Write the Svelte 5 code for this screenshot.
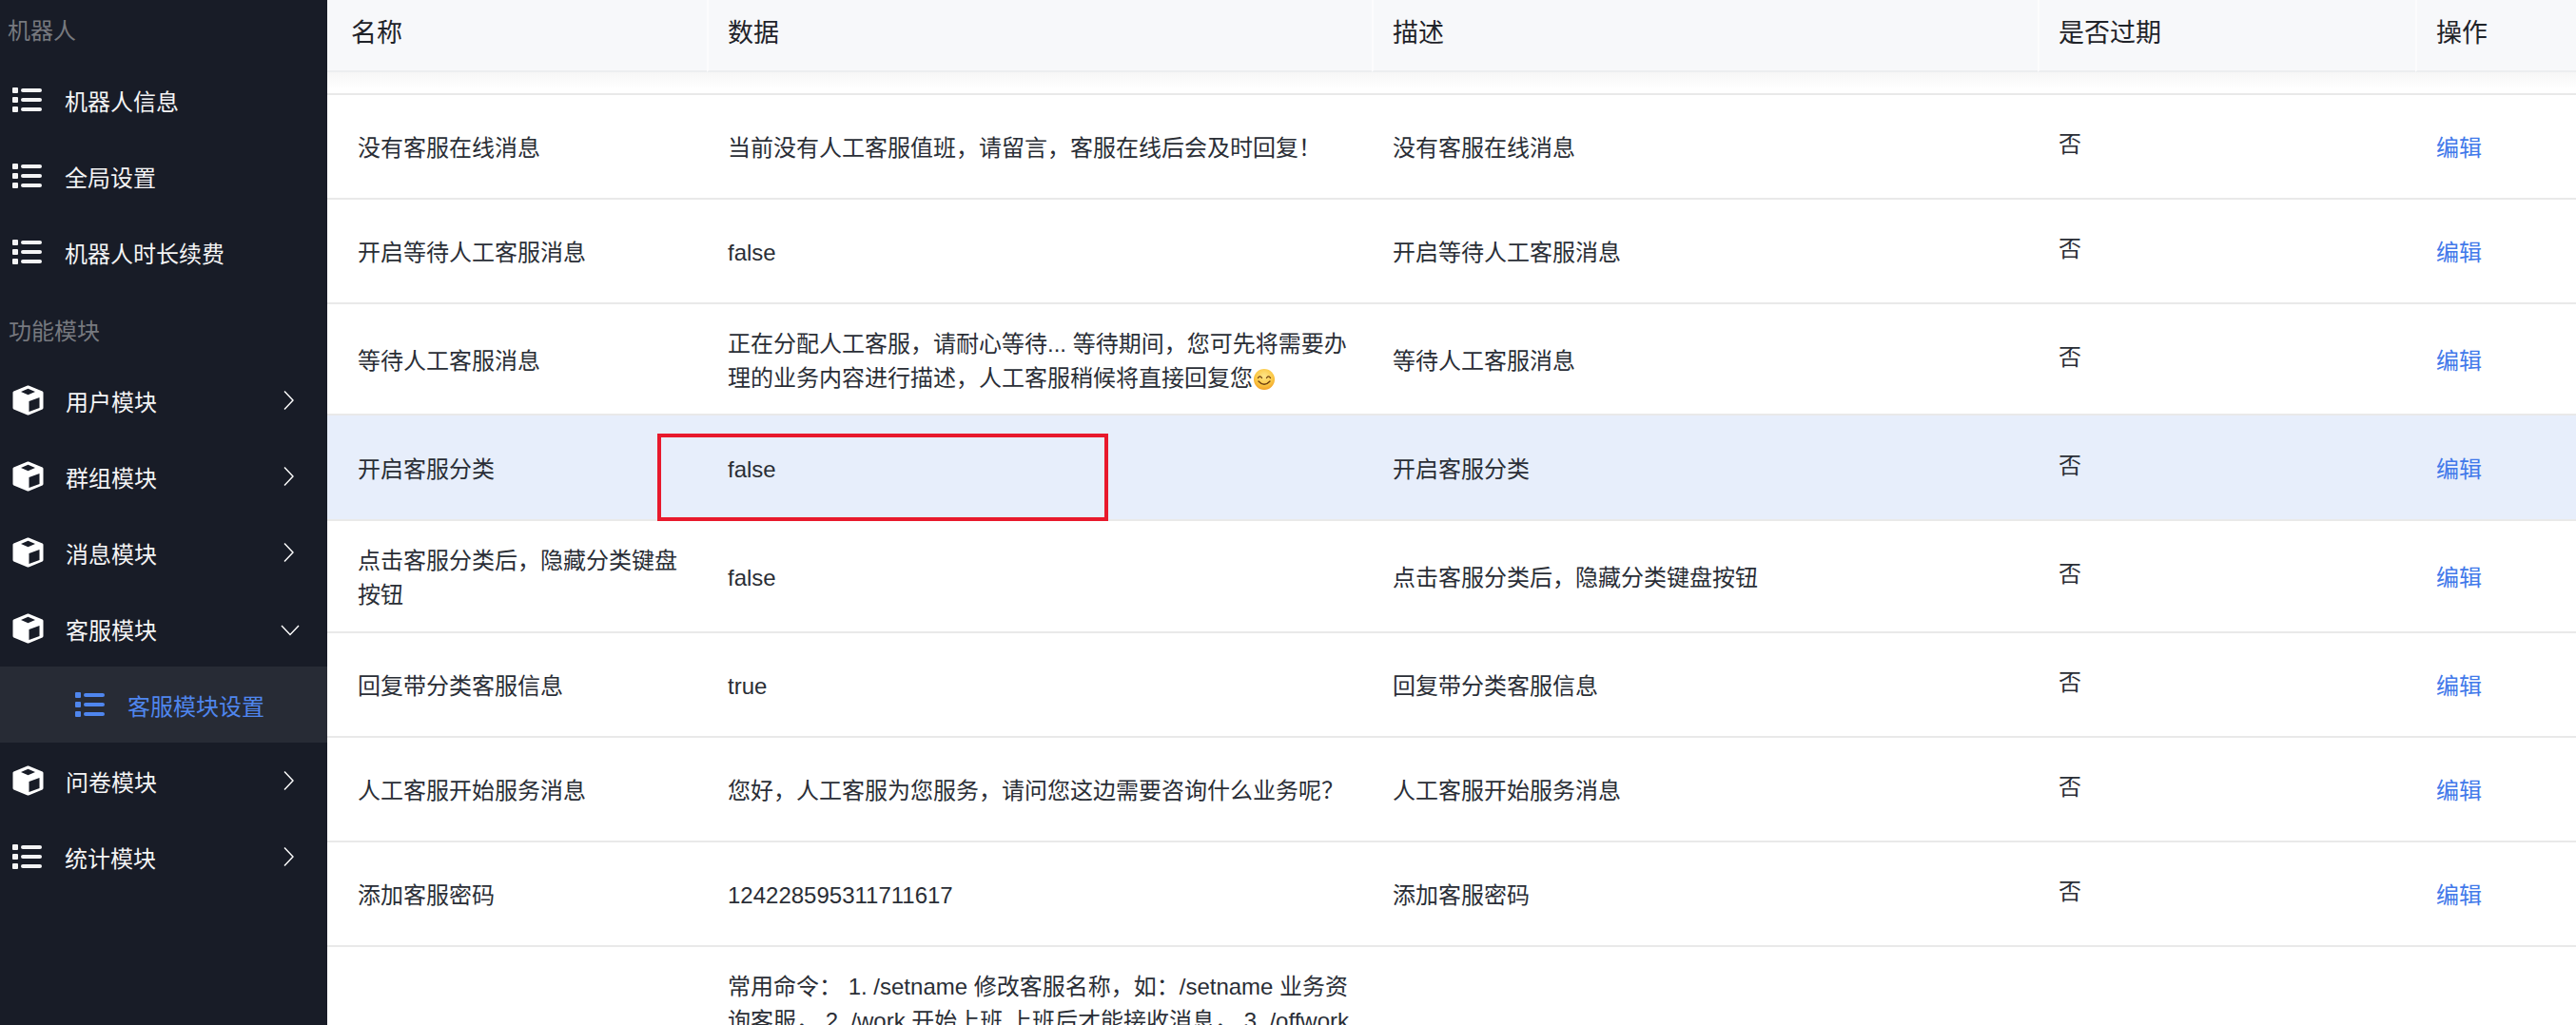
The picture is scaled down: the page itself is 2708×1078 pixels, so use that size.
<script>
  const topItems = ['机器人信息', '全局设置', '机器人时长续费'];
  const modules = [
    { name: '用户模块', icon: 'cube' },
    { name: '群组模块', icon: 'cube' },
    { name: '消息模块', icon: 'cube' },
    { name: '客服模块', icon: 'cube', open: true, children: ['客服模块设置'] },
    { name: '问卷模块', icon: 'cube' },
    { name: '统计模块', icon: 'list' }
  ];
  const columns = ['名称', '数据', '描述', '是否过期', '操作'];
  const rows = [
    { name: '没有客服在线消息', data: '当前没有人工客服值班，请留言，客服在线后会及时回复！' },
    { name: '开启等待人工客服消息', data: 'false' },
    { name: '等待人工客服消息', data: '正在分配人工客服，请耐心等待... 等待期间，您可先将需要办理的业务内容进行描述，人工客服稍候将直接回复您', emoji: true, tight: true },
    { name: '开启客服分类', data: 'false', active: true },
    { name: '点击客服分类后，隐藏分类键盘按钮', data: 'false' },
    { name: '回复带分类客服信息', data: 'true' },
    { name: '人工客服开始服务消息', data: '您好，人工客服为您服务，请问您这边需要咨询什么业务呢？' },
    { name: '添加客服密码', data: '124228595311711617' },
    { name: '', data: '常用命令： 1. /setname 修改客服名称，如：/setname 业务资询客服， 2. /work 开始上班 上班后才能接收消息， 3. /offwork 下班 下班后不再接收消息', hideOps: true }
  ];
</script>

{#snippet listIcon()}
  <svg class="icon" width="32" height="26" viewBox="0 0 32 26" fill="currentColor">
    <rect x="0" y="0" width="6" height="6" rx="1" />
    <rect x="0" y="10" width="6" height="6" rx="1" />
    <rect x="0" y="20" width="6" height="6" rx="1" />
    <rect x="9" y="1" width="22" height="4" rx="2" />
    <rect x="9" y="11" width="22" height="4" rx="2" />
    <rect x="9" y="21" width="22" height="4" rx="2" />
  </svg>
{/snippet}

{#snippet cubeIcon()}
  <svg class="icon" width="33" height="32" viewBox="0 0 33 32">
    <path d="M16.5 2 L31 8 V24 L16.5 30 L2 24 V8 Z" fill="#fff" stroke="#fff" stroke-width="3" stroke-linejoin="round" />
    <path d="M16.5 3.8 L24 7 L16.5 10.2 L9 7 Z" fill="#181c27" />
    <path d="M17.5 17 L28.5 13 V24 L17.5 28 Z" fill="#181c27" />
  </svg>
{/snippet}

{#snippet chevron(open)}
  {#if open}
    <svg class="chev down" width="20" height="12" viewBox="0 0 20 12" fill="none" stroke="#fff" stroke-width="1.4"><path d="M1 1 L10 10.5 L19 1" /></svg>
  {:else}
    <svg class="chev" width="11" height="20" viewBox="0 0 11 20" fill="none" stroke="#fff" stroke-width="1.4"><path d="M1 0.5 L10 10 L1 19.5" /></svg>
  {/if}
{/snippet}

<div class="layout">
  <nav class="sidebar">
    <div class="group first">机器人</div>
    {#each topItems as item}
      <div class="item">{@render listIcon()}<span>{item}</span></div>
    {/each}
    <div class="group">功能模块</div>
    {#each modules as m}
      <div class="item">
        {#if m.icon === 'cube'}{@render cubeIcon()}{:else}{@render listIcon()}{/if}
        <span>{m.name}</span>
        {@render chevron(m.open)}
      </div>
      {#if m.children}
        {#each m.children as child}
          <div class="item sub">{@render listIcon()}<span>{child}</span></div>
        {/each}
      {/if}
    {/each}
  </nav>

  <main class="content">
    <table>
      <colgroup>
        <col style="width: 399px" />
        <col style="width: 699px" />
        <col style="width: 700px" />
        <col style="width: 397px" />
        <col style="width: 169px" />
      </colgroup>
      <thead>
        <tr>
          {#each columns as col}
            <th>{col}</th>
          {/each}
        </tr>
      </thead>
      <tbody>
        <tr class="spacer"><td colspan="5"></td></tr>
        {#each rows as row}
          <tr class:active={row.active} class:tight={row.tight}>
            <td class="name">{row.name}</td>
            <td>
              {row.data}
              {#if row.emoji}
                <svg class="emoji" width="22" height="22" viewBox="0 0 22 22">
                  <defs>
                    <radialGradient id="face" cx="50%" cy="35%" r="70%">
                      <stop offset="0%" stop-color="#fde58a" />
                      <stop offset="60%" stop-color="#fbc845" />
                      <stop offset="100%" stop-color="#ef9a20" />
                    </radialGradient>
                  </defs>
                  <circle cx="11" cy="11" r="11" fill="url(#face)" />
                  <path d="M4.5 9.5 Q6.5 6.2 8.5 9.5 M13.5 9.5 Q15.5 6.2 17.5 9.5" fill="none" stroke="#6b3d10" stroke-width="1.3" stroke-linecap="round" />
                  <path d="M5 13 Q11 19.5 17 13" fill="none" stroke="#6b3d10" stroke-width="1.4" stroke-linecap="round" />
                </svg>
              {/if}
            </td>
            <td>{row.hideOps ? '' : row.name}</td>
            <td class="expired">{row.hideOps ? '' : '否'}</td>
            <td>{#if !row.hideOps}<a href="#top" class="link">编辑</a>{/if}</td>
          </tr>
        {/each}
      </tbody>
    </table>
    <div class="mark"></div>
  </main>
</div>

<style>
  :global(body) {
    margin: 0;
    background: #fff;
  }
  .layout {
    display: flex;
    width: 2708px;
    height: 1078px;
    overflow: hidden;
    font-family: "Liberation Sans", "Noto Sans CJK SC", sans-serif;
    font-size: 24px;
  }
  .sidebar {
    flex: 0 0 344px;
    background: #181c27;
    color: #fff;
  }
  .group {
    height: 76px;
    padding: 28px 0 0 9px;
    box-sizing: border-box;
    line-height: 32px;
    color: #77797f;
  }
  .group.first {
    height: 65px;
    padding: 17px 0 0 8px;
  }
  .item {
    display: flex;
    align-items: center;
    height: 80px;
    padding-left: 13px;
    color: #f4f4f5;
    position: relative;
  }
  .item span {
    margin-left: 23px;
  }
  .item :global(.icon) {
    flex: none;
  }
  .item :global(.chev) {
    position: absolute;
    left: 298px;
    top: 30px;
  }
  .item :global(.chev.down) {
    left: 295px;
    top: 36px;
  }
  .item.sub {
    background: #272b35;
    color: #4f86ee;
    padding-left: 79px;
  }
  .content {
    flex: 1;
    position: relative;
    height: 1078px;
    overflow: hidden;
  }
  table {
    width: 2364px;
    table-layout: fixed;
    border-collapse: separate;
    border-spacing: 0;
    color: #2a2e36;
  }
  th {
    height: 76px;
    padding: 0 22px 9px 20px;
    box-sizing: border-box;
    text-align: left;
    font-weight: 400;
    font-size: 27px;
    color: #1f2329;
    background: #f7f8fa;
    border-bottom: 2px solid #eceef0;
    border-left: 2px solid #fcfcfd;
  }
  th:first-child {
    padding-left: 25px;
    border-left: 0;
  }
  .spacer td {
    height: 22px;
    padding: 0;
    background: linear-gradient(#f6f6f6, #fff 18px);
    border-bottom: 2px solid #e9e9e9;
  }
  td {
    padding: 24px 22px 20px;
    box-sizing: content-box;
    line-height: 36px;
    border-bottom: 2px solid #e9e9e9;
    word-break: break-all;
    vertical-align: middle;
  }
  tbody tr:not(.spacer) td {
    height: 64px;
  }
  td.name {
    padding-left: 32px;
    padding-right: 28px;
  }
  td.expired {
    padding-top: 20px;
    padding-bottom: 24px;
  }
  tr.tight td {
    padding-bottom: 19px;
  }
  tr.tight td.expired {
    padding-bottom: 23px;
  }
  tbody tr.active td {
    height: 65px;
    background: #e7eefb;
  }
  .emoji {
    vertical-align: -4px;
    margin-left: -6px;
  }
  .link {
    color: #4279ea;
    text-decoration: none;
  }
  .mark {
    position: absolute;
    left: 347px;
    top: 456px;
    width: 474px;
    height: 92px;
    box-sizing: border-box;
    border: 4px solid #e8192c;
  }
</style>
